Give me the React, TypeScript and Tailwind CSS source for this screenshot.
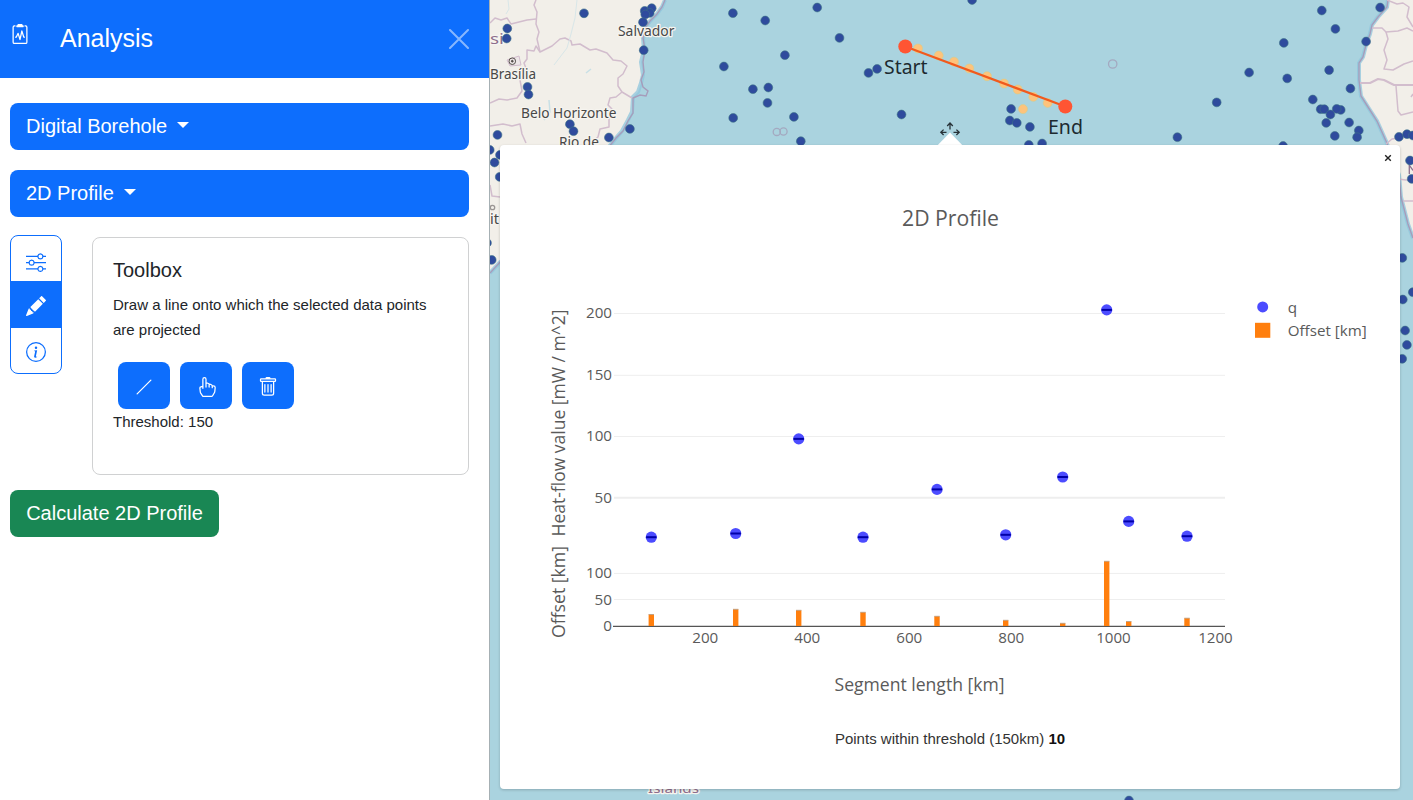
import type { ReactNode } from "react";
import {
  BsClipboard2Pulse,
  BsHandIndex,
  BsInfoCircle,
  BsPencilFill,
  BsSlashLg,
  BsSliders,
  BsTrash,
} from "react-icons/bs";

type Point = [number, number];

const stations: Point[] = [
  [584, 13.3], [507.3, 28.5], [506.7, 38.5], [644.7, 10.9], [651.7, 8.2], [649.7, 12.9], [645.3, 14.5],
  [643, 22.2], [643.7, 50.2], [723.9, 66.5], [527.5, 86.9], [528.5, 94.5], [497.5, 134.9], [569.9, 124.2],
  [573.5, 131.2], [608.9, 137.5], [629.9, 128.9], [489.7, 149.9], [494.5, 162.5], [499.7, 176.9],
  [487, 242.9], [491.7, 259.9], [500, 154.9], [732.9, 13.2], [765.2, 20.5], [817.2, 7.5], [839.5, 37.9],
  [784.9, 55.2], [752.9, 89.2], [768.3, 87.5], [767.5, 102.9], [733.2, 117.9], [793.9, 116.9], [800.8, 141.2],
  [868.5, 72.9], [877.1, 68.9], [901.5, 114.5], [972.1, 0], [1011.1, 108.9], [1009.8, 120.5],
  [1016.8, 122.9], [1029.9, 126.9], [1028.8, 144.9], [1042.1, 143.5], [1177.4, 137.2], [1321.8, 10.5],
  [1335.4, 28.9], [1283.8, 42.9], [1380.1, 7.5], [1366.1, 41.5], [1249.1, 72.5], [1287.2, 78.4], [1329.1, 70.1],
  [1216.7, 102.4], [1350.4, 88.5], [1312.8, 99.5], [1320.7, 109.2], [1324.3, 109.2], [1340.7, 109.9],
  [1336.7, 108.9], [1330.4, 114.5], [1326.2, 122.9], [1349.1, 122.5], [1358.8, 130.5], [1357.1, 137.2],
  [1334.8, 135.9], [1283.1, 146], [1399, 136.8], [1407, 134.2], [1413, 135.5], [1410, 160.5],
  [1411.7, 178.9], [1402.3, 257.9], [1402.8, 299.5], [1412.8, 292.2], [1405.1, 330.5], [1406.9, 344.9],
  [1402.2, 358.8], [1129, 800.5],
];

const selected: Point[] = [
  [918, 48.5], [938.7, 55.6], [954, 61.7], [969.3, 68.5], [987, 76.2], [1004, 83.5], [1017.7, 89.5],
  [1033.3, 96.8], [1047.7, 102.9], [1023, 109.1],
];

const brazilCoast =
  "M665 0 L662 7 L657 14 L650 21 L645 28 L643 38 L644 50 L641 62 L643 75 L641 83 L638 92 L633 97 L632 112 L628 120 L622 131 L616 138 L608 148";
const brazilBoundary =
  "M665 0 L662 7 L657 14 L650 21 L645 28 L643 38 L645 50 L643 62 L644 72 L641 80 L643 87 L648 91 L646 96 L640 95 L633 98 L633 113 L628 121 L623 131 L616 138 L608 148";
const africaCoast =
  "M1388 0 L1387 7 L1378 17 L1372 25 L1370 34 L1366 45 L1363 57 L1359 63 L1359 80 L1361 96 L1368 107 L1377 121 L1386 141 L1399 175 L1401 197 L1408 224 L1413 238";

function MapLabel({ x, y, w, size = 13.5, color = "#484848", children }: {
  x: number; y: number; w: number; size?: number; color?: string; children: string;
}) {
  return (
    <text x={x} y={y} textLength={w} fontSize={size} fill={color} stroke="#f6f4ef" strokeWidth="2.5"
      strokeLinejoin="round" paintOrder="stroke" lengthAdjust="spacingAndGlyphs"
      fontFamily='"Noto Sans", sans-serif'>
      {children}
    </text>
  );
}

function BaseMap() {
  return (
    <svg className="block h-[800px] w-[923px]" viewBox="490 0 923 800">
      <rect x="490" y="0" width="923" height="800" fill="#aad3df" />
      <g fill="#f2efe9">
        <path d={`M490 0 ${brazilCoast.replace("M", "L")} L520 240 L501 261 L490 273 Z`} />
        <path d={`${africaCoast} L1413 0 Z`} />
      </g>
      <g fill="none" stroke="#8fc6dc" strokeWidth="4" opacity="0.75">
        <path d={brazilCoast} />
        <path d={africaCoast} />
        <path d="M501 261 L490 273" />
      </g>
      <g fill="none" stroke="#a69dbb" strokeWidth="1.4">
        <path d={brazilBoundary} />
        <path d={africaCoast} />
        <path d="M501 261 L490 273" />
      </g>
      <g fill="none" stroke="#d2bdcd" strokeWidth="1.5" strokeLinejoin="round">
        <path d="M490 23 L495 18 L501 20 L507 18 L511 24 L519 22 L527 20 L536 19" />
        <path d="M536 0 L534 5 L537 12 L536 24 L539 32 L537 39 L540 52 L552 46 L560 39 L565 38 L571 41 L572 45 L580 44 L590 50 L596 49 L607 53 L613 60 L621 61 L627 66 L623 74 L618 78 L618 86 L622 92 L632 98" />
        <path d="M540 52 L536 46 L534 51 L527 50 L527 59 L524 63 L527 71 L520 80 L522 91 L517 98 L507 100 L499 99 L490 103" />
        <path d="M622 92 L616 97 L610 98 L608 105 L612 109 L609 117 L609 127 L600 129 L598 137 L590 144" />
        <path d="M490 126 L503 124 L512 126 L520 124 L522 134 L526 143" />
        <path d="M490 185 L492 196 L500 197" />
        <path d="M507 60 L519 56 L521 65 L510 66 Z" strokeWidth="1" fill="#eee7e8" />
        <path d="M1372 28 L1382 28 L1386 32 L1398 31 L1407 28 L1413 31" />
        <path d="M1387 0 L1397 4 L1403 3 L1409 7 L1407 17 L1413 27" />
        <path d="M1386 32 L1388 39 L1384 50 L1387 60 L1384 69 L1393 70 L1404 64 L1413 61" />
        <path d="M1360 83 L1370 83 L1378 79 L1384 80 L1394 85 L1413 85" strokeWidth="2" />
        <path d="M1396 86 L1398 111 L1401 115 L1413 112" />
        <path d="M1386 144 L1392 139 L1399 138 M1398 179 L1406 180 L1413 179 M1403 201 L1413 201" />
        <path d="M1413 94 L1411 97" />
      </g>
      <g fill="none" stroke="#d8e6e8" strokeWidth="1">
        <path d="M577 0 L575 18 L571 34 L567 48 L554 65" />
        <path d="M508 0 L509 9 L506 14" />
        <path d="M549 100 L550 112 L544 120 M586 73 L591 69" stroke="#c8e0e6" strokeWidth="1.5" />
      </g>
      <g fill="none" stroke="#a4a9c0" strokeWidth="1.3">
        <circle cx="776.8" cy="131.9" r="3.6" />
        <circle cx="783.5" cy="131.5" r="3.6" />
        <circle cx="1112.7" cy="64" r="4.2" />
        <circle cx="492.5" cy="207.5" r="2.2" stroke="#9b9694" />
      </g>
      <MapLabel x={490} y={44} w={14} color="#8d6e8d">si</MapLabel>
      <g fill="none" stroke="#55504c">
        <circle cx="512.3" cy="61.2" r="3.3" />
        <circle cx="512.3" cy="61.2" r="0.9" fill="#55504c" />
      </g>
      <MapLabel x={490} y={78.5} w={46}>Brasília</MapLabel>
      <MapLabel x={521} y={118} w={95.5}>Belo Horizonte</MapLabel>
      <MapLabel x={559} y={147} w={40}>Rio de</MapLabel>
      <MapLabel x={618} y={35.5} w={56.5}>Salvador</MapLabel>
      <MapLabel x={490} y={223.5} w={9}>it</MapLabel>
      <path d="M1409.3 174 V165.2 L1413 170.5" fill="none" stroke="#8d6e8d" strokeWidth="1.3" />
      <MapLabel x={648} y={793} w={51} size={13} color="#8d6e8d">Islands</MapLabel>
      <g fill="#2f4b9d" stroke="#3c7287" strokeWidth="0.6">
        {stations.map(([x, y], i) => (
          <circle key={i} cx={x} cy={y} r="4.4" />
        ))}
      </g>
      <g fill="#fdc37c" stroke="#d5cd8c" strokeWidth="0.6">
        {selected.map(([x, y], i) => (
          <circle key={i} cx={x} cy={y} r="4.5" />
        ))}
      </g>
      <path d="M905.3 46.5 L1065.3 106.5" stroke="#f15a1d" strokeWidth="2.2" />
      <circle cx="905.3" cy="46.5" r="7" fill="#ff5533" />
      <circle cx="1065.3" cy="106.5" r="7" fill="#ff5533" />
      <g fill="#1d2a30" fontSize="20.5" fontFamily='"Noto Sans", sans-serif'>
        <text x="884" y="74" textLength="43.5" lengthAdjust="spacingAndGlyphs">Start</text>
        <text x="1048" y="134" textLength="35" lengthAdjust="spacingAndGlyphs">End</text>
      </g>
      <path d="M931 152 L950 132.5 L969 152 Z" fill="#fff" />
      <g fill="none" stroke="#273238" strokeWidth="1.3">
        <path d="M950 129.5 V123 M947.2 126 L950 123 L952.8 126" />
        <path d="M946.5 132.3 H941 M943.6 129.6 L940.8 132.3 L943.6 135" />
        <path d="M953.5 132.3 H959 M956.4 129.6 L959.2 132.3 L956.4 135" />
      </g>
    </svg>
  );
}

const samples = [
  { x: 651.3, y: 537.2, top: 614.5 },
  { x: 735.7, y: 533.5, top: 609.3 },
  { x: 798.7, y: 438.9, top: 610.3 },
  { x: 863, y: 537.2, top: 612.3 },
  { x: 937, y: 489.4, top: 616.3 },
  { x: 1005.7, y: 534.8, top: 620.3 },
  { x: 1062.7, y: 477, top: 623.3 },
  { x: 1106.7, y: 309.9, top: 561.3 },
  { x: 1128.7, y: 521.4, top: 621.5 },
  { x: 1187, y: 536.2, top: 618.2 },
];

const yTicks: [string, number, number][] = [
  ["200", 313, 26], ["150", 374.3, 26], ["100", 436, 26], ["50", 497.2, 17.4],
  ["100", 573, 26], ["50", 599.2, 17.4], ["0", 626, 8.7],
];

const xTicks: [string, number, number][] = [
  ["200", 705.3, 26], ["400", 807.3, 26], ["600", 909.3, 26], ["800", 1011.3, 26],
  ["1000", 1113.5, 34.5], ["1200", 1215.5, 34.5],
];

function ProfileChart() {
  return (
    <svg className="block h-[560px] w-[900px]" viewBox="500 145 900 560" fill="#5a5a5a"
      fontFamily='"Open Sans", sans-serif'>
      <text x="902" y="226" fontSize="21.5" textLength="97" lengthAdjust="spacingAndGlyphs">2D Profile</text>
      <g stroke="#eee" strokeWidth="1">
        <path d="M614 313.5 H1225 M614 375.3 H1225 M614 436.5 H1225 M614 573.4 H1225 M614 599.5 H1225" />
        <path d="M614 497.8 H1225" strokeWidth="2" />
      </g>
      <path d="M613 626.4 H1225" stroke="#555" strokeWidth="1.1" />
      <g fontSize="15.2">
        {yTicks.map(([label, y, w], i) => (
          <text key={i} x={612 - w} y={y + 5.3} textLength={w} lengthAdjust="spacingAndGlyphs">{label}</text>
        ))}
        {xTicks.map(([label, x, w]) => (
          <text key={label} x={x - w / 2} y="643" textLength={w} lengthAdjust="spacingAndGlyphs">{label}</text>
        ))}
      </g>
      {samples.map((s) => (
        <g key={s.x}>
          <rect x={s.x - 2.7} y={s.top} width="5.4" height={626 - s.top} fill="#ff7f0e" />
          <path d={`M${s.x - 2.7} ${s.top} h5.4`} stroke="#b59a80" strokeWidth="0.8" />
          <circle cx={s.x} cy={s.y} r="5.6" fill="#4c4cff" />
          <path d={`M${s.x - 5.2} ${s.y} h10.4`} stroke="#0000a8" strokeWidth="2" />
        </g>
      ))}
      <g fontSize="18">
        <text transform="translate(565 536.5) rotate(-90)" textLength="227" lengthAdjust="spacingAndGlyphs">Heat-flow value [mW / m^2]</text>
        <text transform="translate(565 638) rotate(-90)" textLength="92" lengthAdjust="spacingAndGlyphs">Offset [km]</text>
        <text x="834.5" y="690.7" textLength="170" lengthAdjust="spacingAndGlyphs">Segment length [km]</text>
      </g>
      <circle cx="1262.7" cy="306.9" r="5.5" fill="#4c4cff" />
      <rect x="1255" y="322.8" width="15.3" height="15" fill="#ff7f0e" />
      <g fontSize="15.2">
        <text x="1287.7" y="313">q</text>
        <text x="1287.7" y="335.6" textLength="79" lengthAdjust="spacingAndGlyphs">Offset [km]</text>
      </g>
    </svg>
  );
}

function DropdownButton({ children }: { children: ReactNode }) {
  return (
    <button className="flex h-[47px] w-full shrink-0 items-center gap-[10px] rounded-lg bg-[#0d6efd] px-4 pb-[2px] text-left text-xl text-white">
      {children}
      <svg className="mt-[-2px] h-[6px] w-3" viewBox="0 0 12 6" fill="currentColor">
        <path d="M0 0 H12 L6 6 Z" />
      </svg>
    </button>
  );
}

function ToolButton({ children }: { children: ReactNode }) {
  return (
    <button className="flex h-[47px] w-[52px] items-center justify-center rounded-lg bg-[#0d6efd] pt-[2px] text-xl text-white">
      {children}
    </button>
  );
}

export default function App() {
  return (
    <div className="flex h-[800px] w-[1413px] overflow-hidden bg-white font-['Liberation_Sans',Arial,sans-serif] text-[#212529]">
      <aside className="flex w-[490px] shrink-0 flex-col border-r border-[#a6b0b4]">
        <header className="flex h-[78px] shrink-0 items-center bg-[#0d6efd] pr-5 pl-[10px] text-white">
          <BsClipboard2Pulse className="mb-[10px] size-5" />
          <h1 className="mb-[2px] ml-[30px] flex-1 text-[25px] leading-[30px]">Analysis</h1>
          <button aria-label="Close" className="opacity-50">
            <svg className="size-5" viewBox="0 0 20 20" fill="none" stroke="currentColor" strokeWidth="2" strokeLinecap="round">
              <path d="M1 1 L19 19 M19 1 L1 19" />
            </svg>
          </button>
        </header>

        <div className="flex flex-col gap-5 pt-[25px] pr-5 pl-[10px]">
          <DropdownButton>Digital Borehole</DropdownButton>
          <DropdownButton>2D Profile</DropdownButton>
        </div>

        <div className="mt-[18px] flex gap-[30px] pr-5 pl-[10px]">
          <nav className="flex h-[139px] w-[52px] flex-col overflow-hidden rounded-lg border border-[#0d6efd] text-xl text-[#0d6efd]">
            <button className="flex h-[45px] items-center justify-center pt-[6px]"><BsSliders /></button>
            <button className="flex h-[47px] items-center justify-center bg-[#0d6efd] pt-[3px] text-white"><BsPencilFill /></button>
            <button className="flex h-[45px] items-center justify-center pt-[3px]"><BsInfoCircle /></button>
          </nav>
          <section className="mt-[2px] h-[238px] flex-1 rounded-lg border border-[#d0d1d2] p-5">
            <h2 className="text-xl leading-6">Toolbox</h2>
            <p className="mt-[10px] text-[15px] leading-[25px]">
              Draw a line onto which the selected data points
              <br />
              are projected
            </p>
            <div className="mt-5 ml-[5px] flex gap-[10px]">
              <ToolButton><BsSlashLg /></ToolButton>
              <ToolButton><BsHandIndex /></ToolButton>
              <ToolButton><BsTrash /></ToolButton>
            </div>
            <p className="text-[15px] leading-[25px]">Threshold: 150</p>
          </section>
        </div>

        <div className="mt-[15px] pl-[10px]">
          <button className="h-[47px] w-[209px] rounded-lg bg-[#198754] pb-[2px] text-xl text-white">Calculate 2D Profile</button>
        </div>
      </aside>

      <main className="relative flex-1">
        <BaseMap />
        <div className="absolute top-[145px] left-[10px] flex h-[644px] w-[900px] flex-col rounded-[4px] bg-white shadow-[0_1px_3px_rgba(0,0,0,0.2)]">
          <ProfileChart />
          <p className="mt-[22px] text-center text-[15px] leading-6 text-[#333]">
            Points within threshold (150km) <b className="text-[#111]">10</b>
          </p>
          <button aria-label="Close popup" className="absolute top-[9px] right-[8px] size-2 text-[#222]">
            <svg className="size-2" viewBox="0 0 8 8" fill="none" stroke="currentColor" strokeWidth="1.4">
              <path d="M1.2 1.2 L6.8 6.8 M6.8 1.2 L1.2 6.8" />
            </svg>
          </button>
        </div>
      </main>
    </div>
  );
}
